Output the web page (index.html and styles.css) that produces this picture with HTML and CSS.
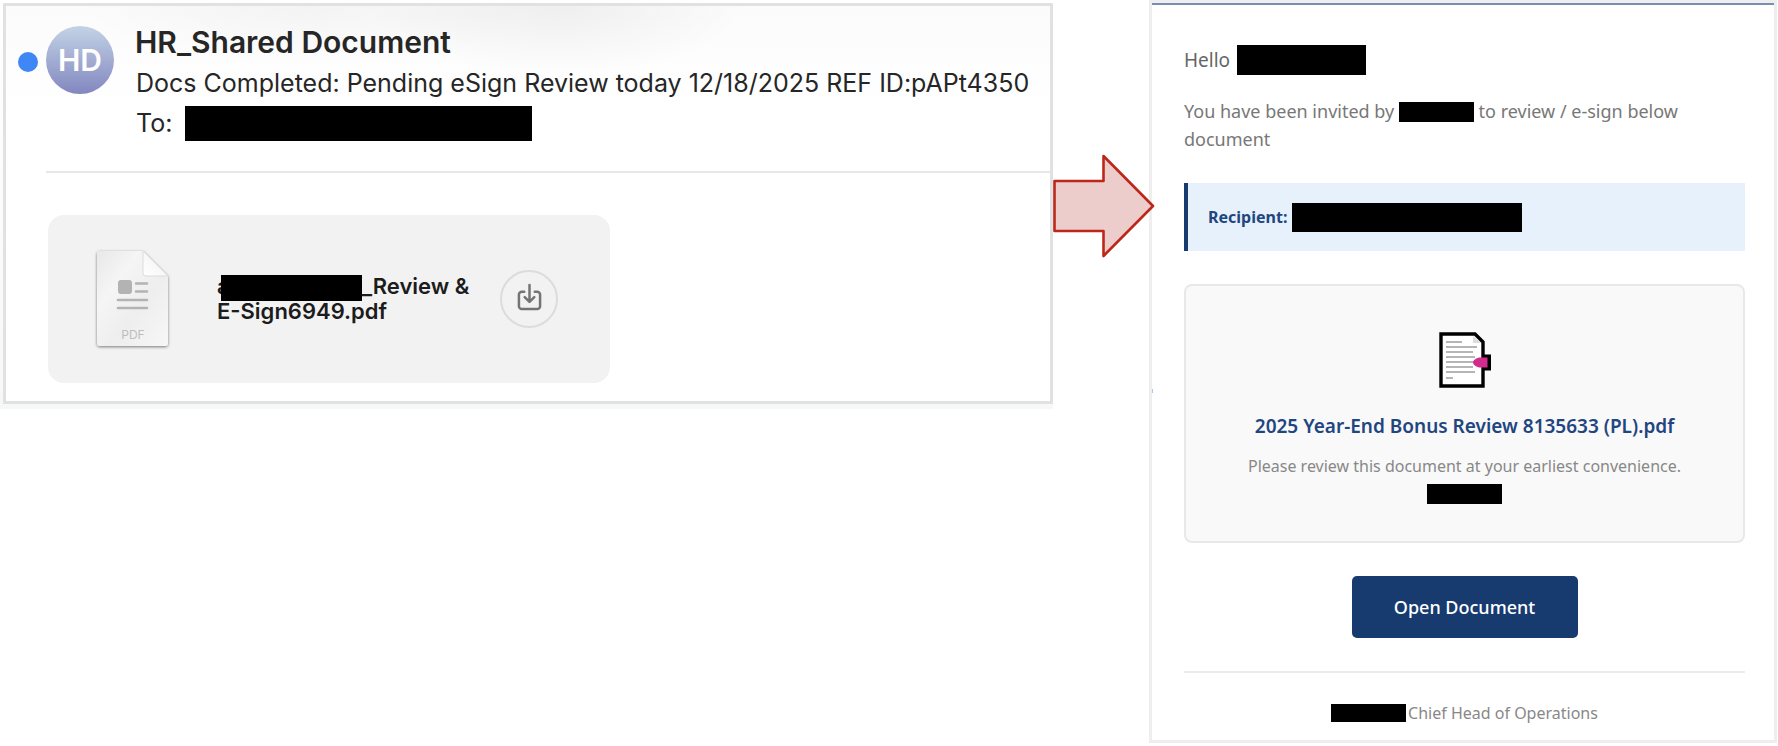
FILE: index.html
```html
<!DOCTYPE html>
<html lang="en">
<head>
<meta charset="utf-8">
<title>HR_Shared Document</title>
<link rel="stylesheet" href="styles.css">
</head>
<body>
<main class="stage">
  <section class="mail-frame">
    <article class="mail">
      <header class="mail-header">
        <span class="unread"></span>
        <span class="avatar">HD</span>
        <div class="mail-meta">
          <h1 class="sender">HR_Shared Document</h1>
          <p class="subject">Docs Completed: Pending eSign Review today 12/18/2025 REF ID:pAPt4350</p>
          <p class="to">To: <span class="bar bar-to"></span></p>
        </div>
      </header>
      <div class="mail-body">
        <div class="attachment">
          <svg class="pdf-icon" viewBox="0 0 84 108">
            <defs>
              <linearGradient id="page" x1="0" y1="0" x2="1" y2="1">
                <stop offset="0" stop-color="#e8e8e8"/><stop offset=".3" stop-color="#f5f5f5"/><stop offset=".6" stop-color="#eeeeee"/><stop offset="1" stop-color="#f7f7f7"/>
              </linearGradient>
              <linearGradient id="fold" x1="0" y1="1" x2=".6" y2=".4">
                <stop offset="0" stop-color="#fff"/><stop offset="1" stop-color="#f6f6f6"/>
              </linearGradient>
              <filter id="shade" x="-20%" y="-20%" width="140%" height="140%">
                <feDropShadow dx="0" dy="1" stdDeviation="1.5" flood-color="#000" flood-opacity=".5"/>
              </filter>
            </defs>
            <path filter="url(#shade)" fill="url(#page)" d="M8 6h43l25 25v67a3 3 0 0 1-3 3H8a3 3 0 0 1-3-3V9a3 3 0 0 1 3-3z"/>
            <path fill="url(#fold)" stroke="#dcdcdc" d="M51 6v22q0 3 3 3h22z"/>
            <rect x="26" y="35" width="14" height="14" rx="3" fill="#b3b3b3"/>
            <path stroke="#b3b3b3" stroke-width="2.6" stroke-linecap="round" d="M44 38.500h11M44 46.500h11M26 55h29M26 63h29"/>
            <text x="41" y="94" class="pdf-label">PDF</text>
          </svg>
          <p class="file-name">a<span class="bar bar-file"></span>_Review &amp;<br>E-Sign6949.pdf</p>
          <button class="download" type="button" aria-label="Download">
            <svg viewBox="0 0 26 30" class="download-icon" fill="none" stroke="#747474" stroke-width="2.6" stroke-linecap="round" stroke-linejoin="round">
              <path d="M7.500 9H5a3 3 0 0 0-3 3v12a3 3 0 0 0 3 3h16a3 3 0 0 0 3-3V12a3 3 0 0 0-3-3h-2.500"/>
              <path d="M13 2v17M8 14.500l5 5 5-5"/>
            </svg>
          </button>
        </div>
      </div>
    </article>
  </section>
  <div class="arrow-cell">
    <svg class="arrow" viewBox="0 0 102 104">
      <path d="M1.500 27h49V2L100 52l-49.500 50V77h-49z" fill="#edcdcc" stroke="#bd271a" stroke-width="2.600" stroke-linejoin="round"/>
    </svg>
  </div>
  <section class="invite">
    <p class="hello">Hello <span class="bar bar-name"></span></p>
    <p class="intro">You have been invited by <span class="bar bar-short"></span> to review / e-sign below document</p>
    <p class="recipient"><strong>Recipient:</strong> <span class="bar bar-recipient"></span></p>
    <div class="card">
      <svg class="doc-icon" viewBox="0 0 52 56">
        <path fill="#fff" stroke="#000" stroke-width="3.400" d="M2 2h34l8 8v44H2z"/>
        <path fill="#ddd" d="M34 4v7h8z"/>
        <path stroke="#b5b5b5" stroke-width="2" d="M7 10h16M7 15h31M7 20h27M7 25h29M7 30h28M7 35h27M7 40h29M7 46h7"/>
        <path d="M43 22.500h9v16h-9z"/>
        <path fill="#d12b8b" d="M48.500 25.500v10H40q-6-2-6-5t6-5z"/>
      </svg>
      <h2 class="doc-title">2025 Year-End Bonus Review 8135633 (PL).pdf</h2>
      <p class="doc-note">Please review this document at your earliest convenience.</p>
      <span class="bar bar-short"></span>
    </div>
    <button class="open" type="button">Open Document</button>
    <footer class="sign"><span class="bar bar-sign"></span>Chief Head of Operations</footer>
  </section>
</main>
</body>
</html>
```
FILE: styles.css
```css
* { box-sizing: border-box; }
body { margin: 0; background: #fff; }
h1, h2, p { margin: 0; }
button { font: inherit; cursor: pointer; }

.stage {
  display: grid;
  grid-template-columns: minmax(0, 1053fr) minmax(0, 96fr) minmax(0, 628fr);
  align-items: start;
  padding-right: 1px;
}

.bar { display: inline-block; background: #000; flex: none; }
.bar-to { width: 347px; height: 35px; }
.bar-file { width: 141px; height: 26px; }
.bar-name { width: 129px; height: 30px; }
.bar-short { width: 75px; height: 20px; }
.bar-recipient { width: 230px; height: 29px; }
.bar-sign { width: 75px; height: 18px; }

.mail-frame {
  padding: 3px 0 5px 3px;
  background: linear-gradient(#fff, #f6f8f7);
  font-family: Inter, "Liberation Sans", sans-serif;
}
.mail {
  border: 3px solid #e1e1e1;
  background:
    radial-gradient(ellipse 230px 60px at 300px 0, rgba(0, 0, 0, .03), transparent),
    radial-gradient(ellipse 190px 70px at 550px 0, rgba(0, 0, 0, .05), transparent),
    linear-gradient(#fbfbfb, #fff 100px);
}
.mail-header {
  display: flex;
  align-items: flex-start;
  margin-left: 12px;
  position: relative;
  height: 167px;
}
.mail-header::after {
  content: "";
  position: absolute;
  left: 28px;
  right: 0;
  bottom: 0;
  height: 2px;
  background: #e8e8e8;
}
.unread { flex: none; width: 20px; height: 20px; margin-top: 46px; border-radius: 50%; background: #3f87f6; }
.avatar {
  flex: none;
  width: 68px;
  height: 68px;
  margin: 20px 21px 0 8px;
  border-radius: 50%;
  background: linear-gradient(#c3d3e6, #8287bf);
  color: #fff;
  font-size: 30px;
  font-weight: 600;
  line-height: 68px;
  text-align: center;
}
.mail-meta { color: #262626; padding-top: 15px; white-space: nowrap; }
.sender { font-size: 30px; font-weight: 600; line-height: 42px; }
.subject { font-size: 25px; line-height: 40px; padding-left: 1px; }
.to { display: flex; align-items: center; gap: 13px; font-size: 25px; line-height: 40px; padding-left: 1px; }

.mail-body { padding: 42px 42px 18px; }
.attachment {
  display: flex;
  align-items: center;
  width: 562px;
  height: 168px;
  padding-left: 44px;
  border-radius: 16px;
  background: #f2f2f2;
}
.pdf-icon { flex: none; width: 84px; height: 108px; }
.pdf-label { font-size: 12px; fill: #bdbdbd; text-anchor: middle; }
.file-name { flex: none; margin-left: 41px; width: 283px; font-size: 22px; font-weight: 600; line-height: 25px; color: #1c1c1c; }
.bar-file { margin: -4px 0 -4px -9px; vertical-align: -3px; position: relative; }
.download {
  flex: none;
  display: grid;
  place-items: center;
  width: 58px;
  height: 58px;
  padding: 0 0 4px;
  border: 2px solid #dcdcdc;
  border-radius: 50%;
  background: transparent;
}
.download-icon { width: 25px; height: 29px; }

.arrow-cell { padding-top: 154px; position: relative; z-index: 1; }
.arrow { display: block; width: 102px; height: 104px; }

.invite {
  position: relative;
  display: flex;
  flex-direction: column;
  padding: 39px 29px 13px 32px;
  border: 3px solid #eeeeee;
  box-shadow: inset 0 2px #7c8db5;
  font-family: "Noto Sans", "Open Sans", sans-serif;
  color: #777;
}
.invite::before {
  content: "";
  position: absolute;
  left: 0;
  top: 386px;
  width: 1px;
  height: 4px;
  background: #a9c6ee;
}
.hello { display: flex; align-items: center; gap: 7px; font-size: 19px; line-height: 36px; color: #666; }
.intro { margin-top: 19px; font-size: 18px; line-height: 28px; }
.intro .bar { vertical-align: -4px; }
.recipient {
  display: flex;
  align-items: center;
  gap: 5px;
  height: 68px;
  margin-top: 30px;
  padding-left: 20px;
  border-left: 4px solid #173a6f;
  background: #e7f1fc;
  color: #1f4680;
  font-size: 16px;
}
.card {
  display: flex;
  flex-direction: column;
  align-items: center;
  margin-top: 33px;
  padding: 46px 20px 37px;
  border: 2px solid #e8e8e8;
  border-radius: 8px;
  background: #f9f9f9;
}
.doc-icon { width: 52px; height: 56px; }
.doc-title { margin-top: 23px; font-size: 19px; font-weight: 600; line-height: 30px; color: #1f4680; white-space: nowrap; }
.doc-note { margin: 11px 0 4px; font-size: 16px; line-height: 28px; color: #888; white-space: nowrap; }
.open {
  align-self: center;
  width: 226px;
  height: 62px;
  margin-top: 33px;
  border: 0;
  border-radius: 5px;
  background: #173a6f;
  color: #fff;
  font-size: 18px;
  font-weight: 500;
}
.sign {
  display: flex;
  align-items: center;
  justify-content: center;
  gap: 2px;
  margin-top: 33px;
  padding-top: 26px;
  border-top: 2px solid #ececec;
  font-size: 16px;
  line-height: 28px;
  color: #888;
}
```
